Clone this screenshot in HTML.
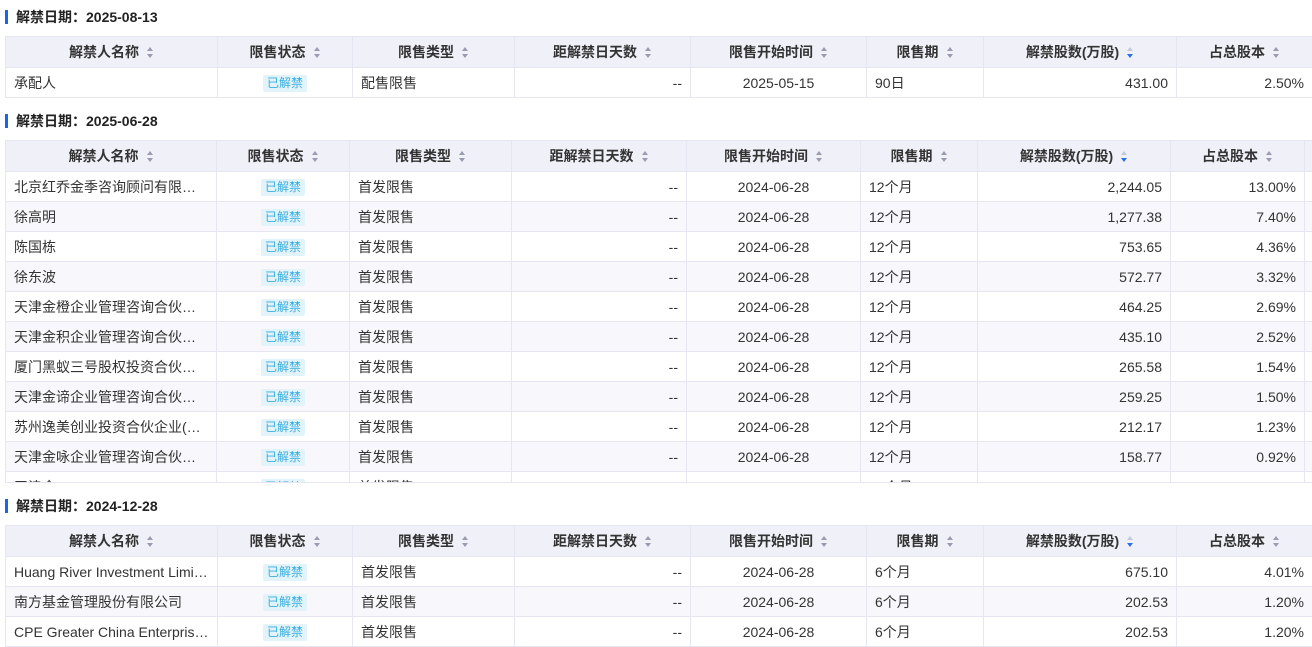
<!DOCTYPE html>
<html><head><meta charset="utf-8"><style>
*{margin:0;padding:0;box-sizing:border-box}
body{width:1312px;height:646px;overflow:hidden;background:#fff;font-family:"Liberation Sans","Noto Sans CJK SC",sans-serif;color:#333;font-size:14px;position:relative}
.h{position:absolute;left:5px;height:16px;font-weight:bold;font-size:14px;color:#222;line-height:16px;padding-left:11px}
.h:before{content:"";position:absolute;left:0;top:1px;width:3px;height:14px;background:#1a66e6}
.w{position:absolute;left:5px;overflow:hidden}
table{border-collapse:collapse;table-layout:fixed}
td,th{border:1px solid #e6e6f2;height:30px;padding:0 8px;white-space:nowrap;overflow:hidden;text-overflow:ellipsis;font-size:14px}
th{background:#f0f0f8;font-weight:bold;color:#333;height:31px}
tr.g td{background:#f8f8fc}
.c{text-align:center}.r{text-align:right}
.tag{display:inline-block;background:#e2f3fa;color:#3aaee0;font-size:12px;line-height:17px;padding:0 4px;border-radius:2px}
.s{display:inline-block;width:7px;height:11px;margin-left:8px;vertical-align:-1px;position:relative}
.s:before,.s:after{content:"";position:absolute;left:0;border-left:3.5px solid transparent;border-right:3.5px solid transparent}
.s:before{top:0;border-bottom:4px solid #9a9ab0}
.s:after{bottom:0;border-top:4px solid #9a9ab0}
.s.d:before{border-bottom-color:#c4c8d8}.s.d:after{border-top-color:#2b6fe0}
</style></head><body>

<div class="h" style="top:9px">解禁日期：2025-08-13</div>
<div class="w" style="top:36px;width:1307px">
<table style="width:1307px">
<colgroup><col style="width:212px"><col style="width:135px"><col style="width:162px"><col style="width:176px"><col style="width:176px"><col style="width:117px"><col style="width:193px"><col style="width:136px"></colgroup>
<tr><th>解禁人名称<i class="s"></i></th><th>限售状态<i class="s"></i></th><th>限售类型<i class="s"></i></th><th>距解禁日天数<i class="s"></i></th><th>限售开始时间<i class="s"></i></th><th>限售期<i class="s"></i></th><th>解禁股数(万股)<i class="s d"></i></th><th>占总股本<i class="s"></i></th></tr>
<tr><td>承配人</td><td class="c"><span class="tag">已解禁</span></td><td>配售限售</td><td class="r">--</td><td class="c">2025-05-15</td><td>90日</td><td class="r">431.00</td><td class="r">2.50%</td></tr>
</table></div>

<div class="h" style="top:113px">解禁日期：2025-06-28</div>
<div class="w" style="top:140px;width:1307px;height:343px;border-bottom:1px solid #e6e6f2">
<table style="width:1307px">
<colgroup><col style="width:211px"><col style="width:133px"><col style="width:162px"><col style="width:175px"><col style="width:174px"><col style="width:117px"><col style="width:193px"><col style="width:134px"><col style="width:8px"></colgroup>
<tr><th>解禁人名称<i class="s"></i></th><th>限售状态<i class="s"></i></th><th>限售类型<i class="s"></i></th><th>距解禁日天数<i class="s"></i></th><th>限售开始时间<i class="s"></i></th><th>限售期<i class="s"></i></th><th>解禁股数(万股)<i class="s d"></i></th><th>占总股本<i class="s"></i></th><th style="padding:0"></th></tr>
<tr><td>北京红乔金季咨询顾问有限公司</td><td class="c"><span class="tag">已解禁</span></td><td>首发限售</td><td class="r">--</td><td class="c">2024-06-28</td><td>12个月</td><td class="r">2,244.05</td><td class="r">13.00%</td><td style="padding:0"></td></tr>
<tr class="g"><td>徐高明</td><td class="c"><span class="tag">已解禁</span></td><td>首发限售</td><td class="r">--</td><td class="c">2024-06-28</td><td>12个月</td><td class="r">1,277.38</td><td class="r">7.40%</td><td style="padding:0"></td></tr>
<tr><td>陈国栋</td><td class="c"><span class="tag">已解禁</span></td><td>首发限售</td><td class="r">--</td><td class="c">2024-06-28</td><td>12个月</td><td class="r">753.65</td><td class="r">4.36%</td><td style="padding:0"></td></tr>
<tr class="g"><td>徐东波</td><td class="c"><span class="tag">已解禁</span></td><td>首发限售</td><td class="r">--</td><td class="c">2024-06-28</td><td>12个月</td><td class="r">572.77</td><td class="r">3.32%</td><td style="padding:0"></td></tr>
<tr><td>天津金橙企业管理咨询合伙企业</td><td class="c"><span class="tag">已解禁</span></td><td>首发限售</td><td class="r">--</td><td class="c">2024-06-28</td><td>12个月</td><td class="r">464.25</td><td class="r">2.69%</td><td style="padding:0"></td></tr>
<tr class="g"><td>天津金积企业管理咨询合伙企业</td><td class="c"><span class="tag">已解禁</span></td><td>首发限售</td><td class="r">--</td><td class="c">2024-06-28</td><td>12个月</td><td class="r">435.10</td><td class="r">2.52%</td><td style="padding:0"></td></tr>
<tr><td>厦门黑蚁三号股权投资合伙企业</td><td class="c"><span class="tag">已解禁</span></td><td>首发限售</td><td class="r">--</td><td class="c">2024-06-28</td><td>12个月</td><td class="r">265.58</td><td class="r">1.54%</td><td style="padding:0"></td></tr>
<tr class="g"><td>天津金谛企业管理咨询合伙企业</td><td class="c"><span class="tag">已解禁</span></td><td>首发限售</td><td class="r">--</td><td class="c">2024-06-28</td><td>12个月</td><td class="r">259.25</td><td class="r">1.50%</td><td style="padding:0"></td></tr>
<tr><td>苏州逸美创业投资合伙企业(有限合伙)</td><td class="c"><span class="tag">已解禁</span></td><td>首发限售</td><td class="r">--</td><td class="c">2024-06-28</td><td>12个月</td><td class="r">212.17</td><td class="r">1.23%</td><td style="padding:0"></td></tr>
<tr class="g"><td>天津金咏企业管理咨询合伙企业</td><td class="c"><span class="tag">已解禁</span></td><td>首发限售</td><td class="r">--</td><td class="c">2024-06-28</td><td>12个月</td><td class="r">158.77</td><td class="r">0.92%</td><td style="padding:0"></td></tr>
<tr><td>天津金</td><td class="c"><span class="tag">已解禁</span></td><td>首发限售</td><td class="r">--</td><td class="c">2024-06-28</td><td>12个月</td><td class="r">100.00</td><td class="r">0.58%</td><td style="padding:0"></td></tr>
</table></div>

<div class="h" style="top:498px">解禁日期：2024-12-28</div>
<div class="w" style="top:525px;width:1307px">
<table style="width:1307px">
<colgroup><col style="width:212px"><col style="width:135px"><col style="width:162px"><col style="width:176px"><col style="width:176px"><col style="width:117px"><col style="width:193px"><col style="width:136px"></colgroup>
<tr><th>解禁人名称<i class="s"></i></th><th>限售状态<i class="s"></i></th><th>限售类型<i class="s"></i></th><th>距解禁日天数<i class="s"></i></th><th>限售开始时间<i class="s"></i></th><th>限售期<i class="s"></i></th><th>解禁股数(万股)<i class="s d"></i></th><th>占总股本<i class="s"></i></th></tr>
<tr><td>Huang River Investment Limited</td><td class="c"><span class="tag">已解禁</span></td><td>首发限售</td><td class="r">--</td><td class="c">2024-06-28</td><td>6个月</td><td class="r">675.10</td><td class="r">4.01%</td></tr>
<tr class="g"><td>南方基金管理股份有限公司</td><td class="c"><span class="tag">已解禁</span></td><td>首发限售</td><td class="r">--</td><td class="c">2024-06-28</td><td>6个月</td><td class="r">202.53</td><td class="r">1.20%</td></tr>
<tr><td>CPE Greater China Enterprises</td><td class="c"><span class="tag">已解禁</span></td><td>首发限售</td><td class="r">--</td><td class="c">2024-06-28</td><td>6个月</td><td class="r">202.53</td><td class="r">1.20%</td></tr>
</table></div>
</body></html>
